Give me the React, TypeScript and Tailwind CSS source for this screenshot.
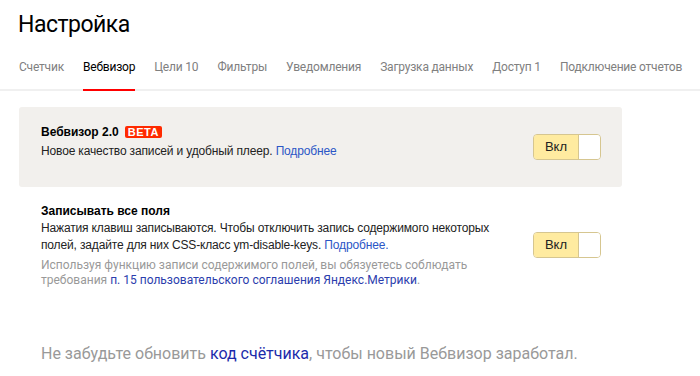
import React from "react";

const tabs = [
  "Счетчик",
  "Вебвизор",
  "Цели 10",
  "Фильтры",
  "Уведомления",
  "Загрузка данных",
  "Доступ 1",
  "Подключение отчетов",
];

function Toggle() {
  return (
    <div className="flex h-[26px] w-[68px] shrink-0 overflow-hidden rounded-[4px] border border-[#d6c690]">
      <div className="flex w-[45px] items-center justify-center border-r border-[#d6c690] bg-[#ffeba0] text-[13px] text-[#222]">
        Вкл
      </div>
      <div className="flex-1 bg-white" />
    </div>
  );
}

export default function App() {
  return (
    <div
      className="relative h-[376px] w-[700px] overflow-hidden bg-white text-[#000]"
      style={{ fontFamily: '"Liberation Sans", Arial, sans-serif' }}
    >
      <div
        className="pl-[18px] pt-[10px] text-[23px] leading-[30px] tracking-[-0.5px] text-[#000]"
        style={{ fontFamily: 'Roboto, sans-serif' }}
      >
        Настройка
      </div>
      <div
        className="mt-[18px] flex whitespace-nowrap border-b-2 border-[#f0f0f0] pl-[19px]"
        style={{ fontFamily: 'Roboto, sans-serif' }}
      >
        {tabs.map((t, i) => (
          <div
            key={t}
            className={
              "mr-[19px] pb-[13px] text-[12px] leading-[18px] tracking-[-0.2px] " +
              (i === 1
                ? "-mb-[2px] border-b-2 border-[#ff0000] text-[#000]"
                : "text-[#808080]")
            }
          >
            {t}
          </div>
        ))}
      </div>
      <div className="mx-[19px] mt-[16px] flex h-[80px] w-[603px] items-center justify-between rounded-[3px] bg-[#f2f0ed] pl-[22px] pr-[21px]">
        <div className="-mt-[12px] whitespace-nowrap">
          <div className="flex items-center text-[12px] font-bold leading-[18px]">
            Вебвизор 2.0
            <span className="ml-[6px] rounded-[2px] bg-[#ff2a00] px-[3px] text-[11px] font-bold leading-[12px] tracking-[0.5px] text-white">
              BETA
            </span>
          </div>
          <div className="mt-[1px] text-[12px] leading-[18px] tracking-[-0.15px] text-[#222]">
            Новое качество записей и удобный плеер.{" "}
            <span className="text-[#2b56c6]">Подробнее</span>
          </div>
        </div>
        <Toggle />
      </div>
      <div className="mt-[15px] flex w-[622px] items-center justify-between pl-[41px] pr-[21px]">
        <div className="whitespace-nowrap">
          <div className="text-[12px] font-bold leading-[18px]">
            Записывать все поля
          </div>
          <div className="text-[12px] leading-[17px] tracking-[-0.15px] text-[#222]">
            Нажатия клавиш записываются. Чтобы отключить запись содержимого
            некоторых
            <br />
            полей, задайте для них CSS-класс ym-disable-keys.{" "}
            <span className="text-[#2b56c6]">Подробнее.</span>
          </div>
          <div
            className="mt-[4px] text-[12px] leading-[15px] text-[#999]"
            style={{ fontFamily: 'Roboto, sans-serif' }}
          >
            Используя функцию записи содержимого полей, вы обязуетесь соблюдать
            <br />
            требования{" "}
            <span className="text-[#2b3dad]">
              п. 15 пользовательского соглашения Яндекс.Метрики
            </span>
            .
          </div>
        </div>
        <Toggle />
      </div>
      <div
        className="mt-[56px] whitespace-nowrap pl-[41px] text-[16px] leading-[20px] text-[#999]"
        style={{ fontFamily: 'Roboto, sans-serif' }}
      >
        Не забудьте обновить <span className="text-[#1c2bab]">код счётчика</span>
        , чтобы новый Вебвизор заработал.
      </div>
    </div>
  );
}
